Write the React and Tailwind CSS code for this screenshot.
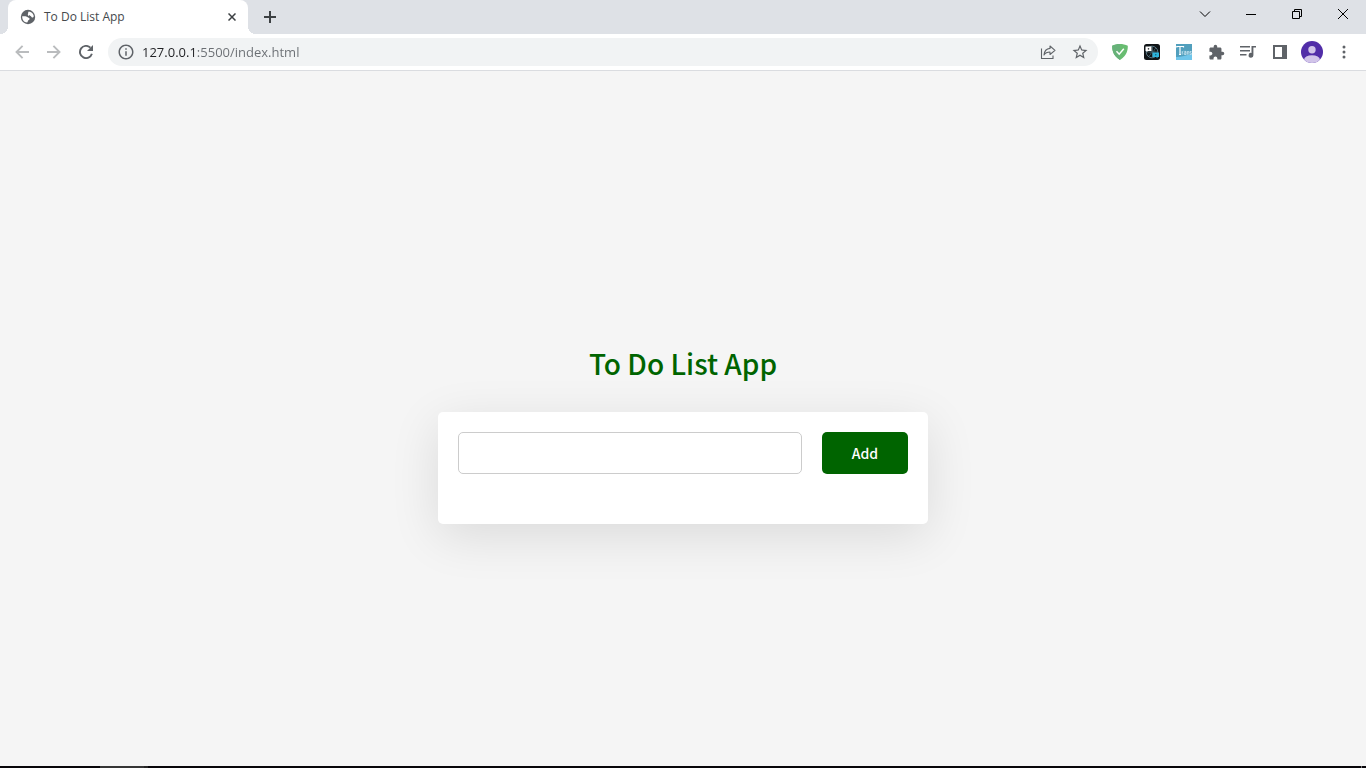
import { useState } from "react";
import { MdInfoOutline, MdStarBorder, MdExtension } from "react-icons/md";

function ToolButton({ label, className = "text-[#5f6368]", children }) {
  return (
    <button type="button" aria-label={label} className={`flex size-8 shrink-0 items-center justify-center rounded-full ${className}`}>
      {children}
    </button>
  );
}

function WindowButton({ label, children }) {
  return (
    <button type="button" aria-label={label} className="flex h-7 w-[46px] items-center justify-center text-black">
      {children}
    </button>
  );
}

function TabStrip() {
  return (
    <div className="flex h-[34px] items-start bg-[#dee1e6] pl-2">
      <div className="relative flex h-full w-60 items-center rounded-t-lg bg-white pr-2 pl-3">
        <span className="absolute bottom-0 -left-2 size-2 bg-[radial-gradient(circle_at_0_0,#dee1e6_8px,#ffffff_8px)]" />
        <span className="absolute -right-2 bottom-0 size-2 bg-[radial-gradient(circle_at_100%_0,#dee1e6_8px,#ffffff_8px)]" />
        <svg viewBox="0 0 16 16" className="size-4" aria-hidden="true">
          <circle cx="8" cy="8" r="7.200" fill="#5f6368" />
          <path
            d="M8.800 2.400c2.300.2 4.300 1.700 4.900 4.400 0 .9-.2 1.600-.9 1.700-1.200.2-1.300-1.100-2.100-1.600-.8-.4-2.100.1-2.700-.7-.5-.8.2-1.300.1-2 0-.7.2-1.200.7-1.800z"
            fill="#fff"
          />
          <path
            d="M2.200 7.300h3.300c1 0 1.600.8 2.500 1.100.9.200 1.700.6 1.600 1.500-.1 1-1.300 1-1.600 1.800-.3.700-.2 1.500-1 1.900C4.200 13.300 2 11 2.200 7.300z"
            fill="#fff"
          />
        </svg>
        <span className="ml-2 flex-1 text-[12px] leading-4 text-[#45494d]">To Do List App</span>
        <button type="button" aria-label="Close tab" className="flex size-4 items-center justify-center text-[#3c4043]">
          <svg viewBox="0 0 8 8" className="size-2" fill="none" stroke="currentColor" strokeWidth="1.500">
            <path d="M.5.5l7 7M7.500.5l-7 7" />
          </svg>
        </button>
      </div>
      <button type="button" aria-label="New tab" className="ml-2 flex h-[34px] w-7 items-center justify-center text-[#3c4043]">
        <svg viewBox="0 0 12 12" className="size-3" fill="none" stroke="currentColor" strokeWidth="2">
          <path d="M6 0v12M0 6h12" />
        </svg>
      </button>
      <div className="ml-auto flex">
        <WindowButton label="Search tabs">
          <svg viewBox="0 0 12 12" className="size-3" fill="none" stroke="currentColor" strokeWidth="1">
            <path d="M1 3.500l5 5 5-5" />
          </svg>
        </WindowButton>
        <WindowButton label="Minimize">
          <svg viewBox="0 0 10 10" className="size-[10px]" fill="currentColor">
            <path d="M0 5h10v1H0z" />
          </svg>
        </WindowButton>
        <WindowButton label="Restore">
          <svg viewBox="0 0 10 10" className="size-[10px]" fill="none" stroke="currentColor">
            <path d="M.5 2.500h7v7h-7zM2.500 2.500v-2h7v7h-2" />
          </svg>
        </WindowButton>
        <WindowButton label="Close">
          <svg viewBox="0 0 10 10" className="size-[10px]" fill="none" stroke="currentColor">
            <path d="M0 0l10 10M10 0L0 10" />
          </svg>
        </WindowButton>
      </div>
    </div>
  );
}

function Toolbar() {
  return (
    <div className="flex h-[37px] items-center border-b border-[#dadce0] bg-white px-[6px]">
      <ToolButton label="Back" className="text-[#babcbe]">
        <svg viewBox="0 0 14 14" className="size-[14px]" fill="none" stroke="currentColor" strokeWidth="1.900">
          <path d="M14 7H1.800M7.600.9L1.500 7l6.100 6.100" />
        </svg>
      </ToolButton>
      <ToolButton label="Forward" className="text-[#babcbe]">
        <svg viewBox="0 0 14 14" className="size-[14px]" fill="none" stroke="currentColor" strokeWidth="1.900">
          <path d="M0 7h12.200M6.400.9L12.500 7l-6.100 6.100" />
        </svg>
      </ToolButton>
      <ToolButton label="Reload">
        <svg viewBox="0 0 14 14" className="size-[14px]">
          <path d="M12.900 8.800A6.100 6.100 0 1 1 11.400 2.700" fill="none" stroke="currentColor" strokeWidth="1.900" />
          <path d="M14 0v6H8z" fill="currentColor" />
        </svg>
      </ToolButton>
      <div className="mr-[6px] ml-[6px] flex h-7 min-w-0 flex-1 items-center rounded-full bg-[#f1f3f4] pr-[2px] pl-[9px]">
        <MdInfoOutline className="size-[18px] shrink-0 text-[#5f6368]" aria-hidden="true" />
        <input
          type="text"
          aria-label="Address"
          defaultValue="127.0.0.1:5500/index.html"
          className="ml-[7px] h-6 min-w-0 flex-1 bg-[linear-gradient(to_right,#202124_55px,#6a6e73_55px)] bg-clip-text text-[13px] text-transparent outline-none"
        />
        <ToolButton label="Share this page">
          <svg viewBox="0 0 16 16" className="size-4" fill="none" stroke="currentColor" strokeWidth="1.100">
            <path d="M1.500 4.500v10h11.500v-3" />
            <path d="M10 2l5 4.300-5 4.200V8C7 8 5.200 9 4 11c.3-3.500 2.500-6.200 6-6.600z" strokeLinejoin="round" />
          </svg>
        </ToolButton>
        <ToolButton label="Bookmark this tab">
          <MdStarBorder className="size-[18px]" />
        </ToolButton>
      </div>
      <ToolButton label="Ad blocker">
        <svg viewBox="0 0 16 16" className="size-4">
          <path d="M8 0c2.500 0 5.500.6 7.800 1.700C15.800 4.400 16 10.800 8 16 0 10.800.2 4.400.2 1.700 2.500.6 5.500 0 8 0z" fill="#68bc71" />
          <path d="M8 0v16C0 10.800.2 4.400.2 1.700 2.500.6 5.500 0 8 0z" fill="#67b279" />
          <path d="M4.500 7.300l2.700 2.900L11.800 4.800" fill="none" stroke="#fff" strokeWidth="1.500" />
        </svg>
      </ToolButton>
      <ToolButton label="Page translator">
        <svg viewBox="0 0 16 16" className="size-4">
          <rect width="16" height="16" rx="2.500" fill="#101417" />
          <circle cx="8" cy="8" r="5.800" fill="none" stroke="#5c7f8d" strokeWidth=".9" />
          <path d="M3 8h11M8.500 2.500v11M5 4c3 2 3 6 0 8M12 4c-3 2-3 6 0 8" fill="none" stroke="#47636f" strokeWidth=".8" />
          <path d="M1.500 2.500h6V7H4L2.500 8.200V7h-1z" fill="#fff" />
          <path d="M4.500 4v1.600M3.700 4.800h1.600" stroke="#30363a" strokeWidth=".8" />
          <path d="M8.500 8.500H15V13h-1.500v1.200L12 13H8.500z" fill="#2db4dd" />
          <path d="M11.700 10v1.500M11 10.700h1.500" stroke="#176078" strokeWidth=".7" />
        </svg>
      </ToolButton>
      <ToolButton label="Trans">
        <svg viewBox="0 0 16 16" className="size-4">
          <rect width="16" height="16" fill="#519fbd" />
          <path d="M0 13C6 13 10 11 16 10v6H0z" fill="#6fc5ea" />
          <path d="M.8 3.500v-1h6.700v1M4 2.500v8M3 10.500h2" fill="none" stroke="#fff" strokeWidth="1.200" />
          <path
            d="M6.200 10.700V7.200M6.200 8.400L7.400 7.300M10 10.700V7.400H8.300M10 8.800H8.200v1.600H10M11.400 10.700V7.300M11.400 7.600h1.500v3.100M15.500 7.500H14v1.400h1.300v1.500H13.800"
            fill="none"
            stroke="#cfe9f4"
            strokeWidth=".8"
          />
        </svg>
      </ToolButton>
      <ToolButton label="Extensions">
        <MdExtension className="size-[17px]" />
      </ToolButton>
      <ToolButton label="Media controls">
        <svg viewBox="0 0 16 14" className="h-[14px] w-4" fill="currentColor">
          <path d="M0 1h10v1.500H0zM0 5h10v1.500H0zM0 9h6.500v1.500H0z" />
          <path d="M11.500 1H16v1.600h-2.600v7.600a2.400 2.400 0 1 1-1.900-2.300z" />
        </svg>
      </ToolButton>
      <ToolButton label="Side panel">
        <svg viewBox="0 0 14 14" className="size-[14px]" fill="currentColor">
          <path fillRule="evenodd" d="M0 0h14v14H0zM2 2v10h7V2z" />
        </svg>
      </ToolButton>
      <ToolButton label="Profile">
        <svg viewBox="0 0 22 22" className="size-[22px]">
          <clipPath id="avatar">
            <circle cx="11" cy="11" r="11" />
          </clipPath>
          <g clipPath="url(#avatar)">
            <rect width="22" height="22" fill="#512da8" />
            <circle cx="11" cy="8.700" r="3.700" fill="#d1c4e9" />
            <ellipse cx="11" cy="19" rx="8" ry="4.800" fill="#d1c4e9" />
          </g>
        </svg>
      </ToolButton>
      <ToolButton label="Browser menu">
        <svg viewBox="0 0 4 14" className="h-[14px] w-1" fill="currentColor">
          <circle cx="2" cy="2" r="1.500" />
          <circle cx="2" cy="7" r="1.500" />
          <circle cx="2" cy="12" r="1.500" />
        </svg>
      </ToolButton>
    </div>
  );
}

function TodoApp() {
  const [text, setText] = useState("");
  const [items, setItems] = useState([]);
  const add = (event) => {
    event.preventDefault();
    if (!text.trim()) return;
    setItems([...items, text.trim()]);
    setText("");
  };
  return (
    <main className="flex flex-1 flex-col items-center justify-center px-5 font-['Noto_Sans_CJK_SC',sans-serif]">
      <h1 className="mt-[29px] mb-7 text-[28px] leading-[42px] font-medium text-[#006400]">To Do List App</h1>
      <div className="w-full max-w-[490px] rounded-[5px] bg-white p-5 shadow-[0_12px_50px_rgba(0,0,0,0.11)]">
        <form onSubmit={add} className="flex gap-5">
          <input
            type="text"
            aria-label="New task"
            value={text}
            onChange={(event) => setText(event.target.value)}
            className="h-[42px] min-w-0 flex-1 rounded-[5px] border border-[#ccc] px-3 text-[14px] outline-none"
          />
          <button type="submit" className="h-[42px] w-[86px] rounded-[5px] bg-[#006400] text-[14px] font-medium text-white">
            Add
          </button>
        </form>
        <ul className="mt-[30px] text-[14px]">
          {items.map((item, index) => (
            <li key={index} className="py-1">{item}</li>
          ))}
        </ul>
      </div>
    </main>
  );
}

export default function App() {
  return (
    <div className="flex min-h-screen flex-col bg-[#f5f5f5] font-['Open_Sans',sans-serif]">
      <header>
        <TabStrip />
        <Toolbar />
      </header>
      <TodoApp />
      <footer className="flex h-[2px] bg-[#08060a] pr-1 pl-[100px]">
        <span className="w-11 bg-[#363636]" />
        <span className="w-1 bg-[#262626]" />
        <span className="ml-auto w-px bg-[#777777]" />
      </footer>
    </div>
  );
}
